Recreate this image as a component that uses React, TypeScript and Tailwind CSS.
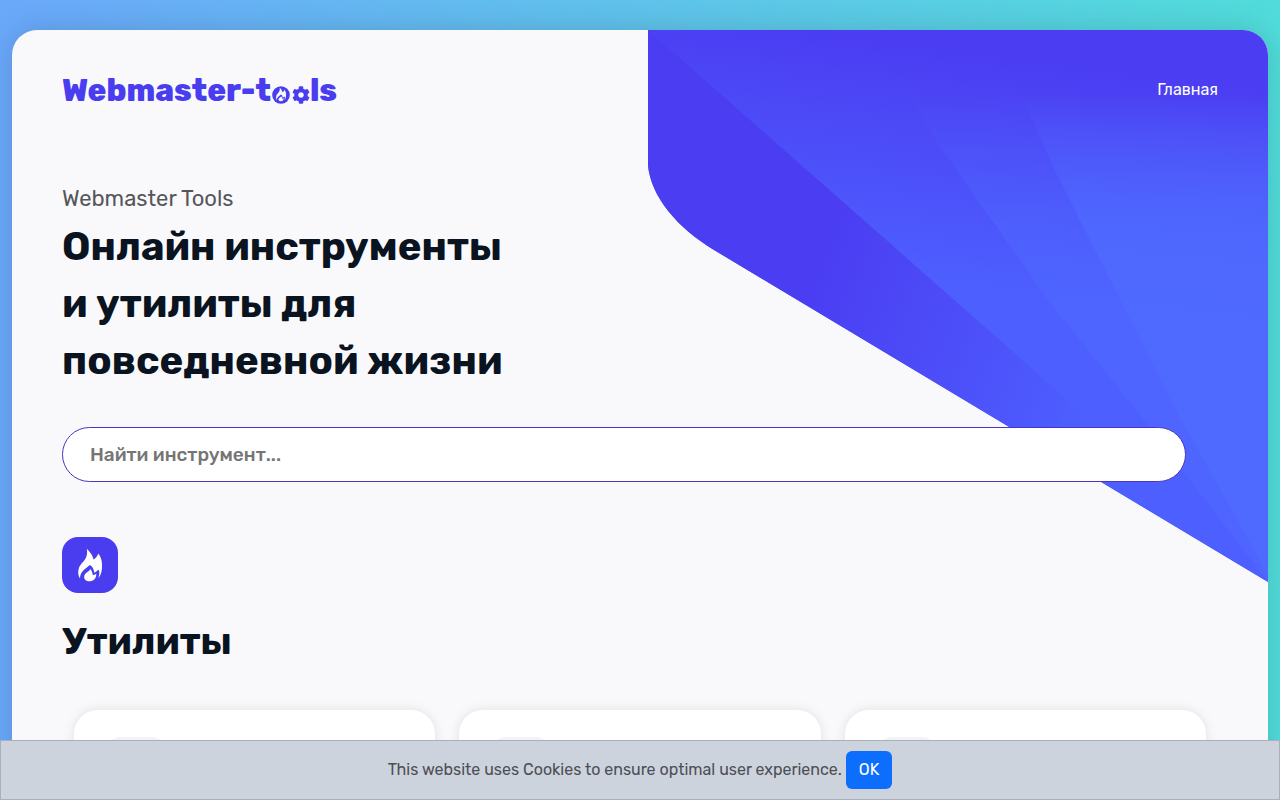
import { FaCog } from 'react-icons/fa';

const FlamePaths = () => (
  <>
    <path d="M29 2C36 10 46 18 49 34C53 31 60 26 63 16C70 24 74 36 74 48C75 66 72 80 63 89C66 80 68 72 64 64C60 66 57 70 51 73C50 62 46 54 38 50C30 58 20 63 14 72C10 78 9 84 9 90C3 82 2 68 6 58C10 46 24 38 28 24C31 16 30 8 29 2Z" />
    <path d="M40 62C44 68 46 74 47 80C50 80 54 78 57 75C58 86 52 98 38 98C26 98 19 92 22 80C26 72 36 70 40 62Z" />
  </>
);

const Logo = () => (
  <a href="#" aria-label="Webmaster-tools" className="flex items-end pt-0.5 text-[31px] leading-9 font-extrabold text-[#4a3df0]">
    <span>Webmaster-t</span>
    <svg className="w-[18px] h-[18px] mb-[5px] ml-px" viewBox="0 0 100 100" aria-hidden="true">
      <circle cx="50" cy="50" r="49" fill="currentColor" />
      <g fill="#f9f9fc" transform="translate(20 8) scale(.78)">
        <FlamePaths />
      </g>
    </svg>
    <FaCog className="w-[18px] h-[18px] mb-[5px] ml-0.5" aria-hidden="true" />
    <span>ls</span>
  </a>
);

const HeroShape = () => (
  <svg
    className="absolute top-0 right-0 w-[620px] h-[552px]"
    viewBox="0 0 620 552"
    preserveAspectRatio="none"
    aria-hidden="true"
  >
    <defs>
      <clipPath id="shape">
        <path d="M0 0H620V552L66 220C26 196-3 160 0 125Z" />
      </clipPath>
      <linearGradient id="upper" gradientUnits="userSpaceOnUse" x1="420" y1="30" x2="390" y2="270">
        <stop offset="0" stopColor="#4b3df2" />
        <stop offset="1" stopColor="#4d60ff" />
      </linearGradient>
      <linearGradient id="lower" gradientUnits="userSpaceOnUse" x1="170" y1="220" x2="470" y2="330">
        <stop offset="0" stopColor="#4b3df2" />
        <stop offset="1" stopColor="#4d60ff" />
      </linearGradient>
      <linearGradient id="ray" gradientUnits="userSpaceOnUse" x1="0" y1="65" x2="0" y2="200">
        <stop offset="0" stopColor="#4f6dff" stopOpacity="0" />
        <stop offset="1" stopColor="#4f6dff" />
      </linearGradient>
    </defs>
    <g clipPath="url(#shape)">
      <rect width="620" height="552" fill="url(#upper)" />
      <path d="M0 0L438 386 500 430 620 552H0Z" fill="url(#lower)" />
      <path d="M245 40L289 112 400 270 500 395 620 552V40Z" fill="url(#ray)" opacity=".4" />
      <path d="M362 40L409 145 465 255 525 375 620 545V40Z" fill="url(#ray)" opacity=".6" />
    </g>
  </svg>
);

const cards = [1, 2, 3];

export default function App() {
  return (
    <div className="h-screen overflow-y-auto [scrollbar-width:none] bg-linear-to-r from-[#6aa8fa] to-[#50dcda] px-3 pt-[30px] pb-20 font-['Rubik','Inter',sans-serif] text-[#4c4f56]">
      <div className="relative overflow-hidden rounded-[25px] bg-[#f9f9fc] px-[50px] pb-12 shadow-[0_0_30px_rgba(0,0,0,0.15)]">
        <HeroShape />

        <div className="relative">
          <header className="flex items-center justify-between pt-[41px]">
            <Logo />
            <nav>
              <a href="#" className="text-base text-white">Главная</a>
            </nav>
          </header>

          <section className="pt-[72px]">
            <p className="mb-px text-[22px] leading-9 text-[#55565a]">Webmaster Tools</p>
            <h1 className="text-[40px] leading-[57px] font-bold text-[#0a1320]">
              Онлайн инструменты
              <br />и утилиты для
              <br />повседневной жизни
            </h1>
          </section>

          <form className="mt-[38px] mr-8">
            <input
              type="search"
              aria-label="Найти инструмент"
              placeholder="Найти инструмент..."
              className="w-full h-[55px] rounded-full border border-[#4a35c0] bg-white px-[27px] text-[19px] font-medium placeholder:text-[#757575] focus:outline-none"
            />
          </form>

          <section className="mt-[55px]">
            <div className="flex w-14 h-14 items-center justify-center rounded-2xl bg-[#4a3df0]">
              <svg className="w-[27px] h-[34px]" viewBox="0 0 80 100" fill="white" aria-hidden="true">
                <FlamePaths />
              </svg>
            </div>
            <h2 className="mt-5 text-[38px] leading-[57px] font-bold text-[#0a1320]">Утилиты</h2>

            <div className="mt-10 grid grid-cols-3 gap-6 px-3">
              {cards.map((card) => (
                <div key={card} className="h-60 rounded-3xl bg-white px-[34px] py-[27px] shadow-[0_0_12px_rgba(0,0,0,0.1)]">
                  <div className="w-14 h-14 rounded-xl bg-[#f2f3f7]" />
                </div>
              ))}
            </div>
          </section>
        </div>
      </div>

      <div className="fixed inset-x-0 bottom-0 flex h-[60px] items-center justify-center gap-1 border border-[#a9b0ba] bg-[#cdd3dc]">
        <span>This website uses Cookies to ensure optimal user experience.</span>
        <button type="button" className="h-[38px] rounded-md bg-[#0d6efd] px-[13px] text-white">OK</button>
      </div>
    </div>
  );
}
